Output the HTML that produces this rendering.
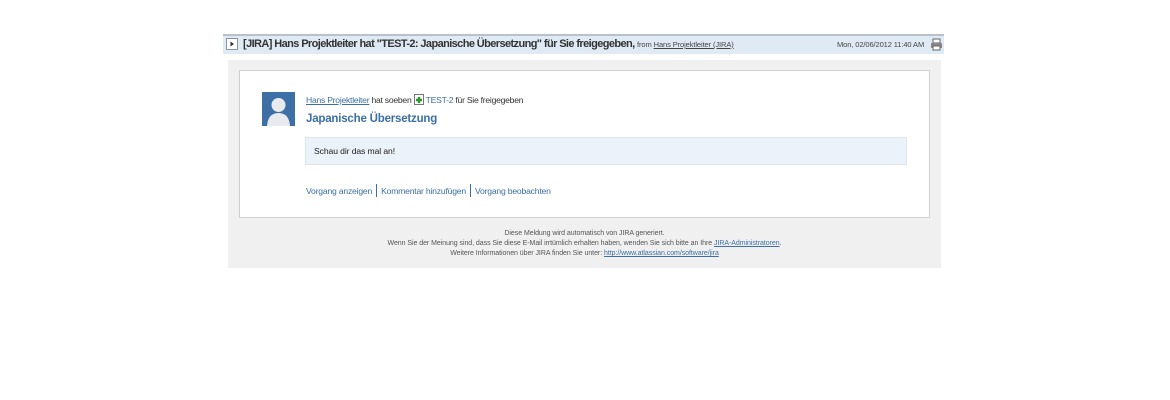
<!DOCTYPE html>
<html><head><meta charset="utf-8"><style>
body{margin:0;width:1170px;height:400px;background:#fff;font-family:"Liberation Sans",Arial,sans-serif;position:relative;overflow:hidden}
.a{position:absolute;white-space:nowrap}
.hdr{left:223px;top:34px;width:721px;height:18px;background:#dfeaf4;border-top:2px solid #b8c2cc;}
.btn{left:226px;top:38px;width:10px;height:10px;border:1px solid #8a96a2;background:#fff}
.title{left:243px;top:38px;font-size:11px;font-weight:bold;color:#333;letter-spacing:-0.6px}
.from{font-size:7.5px;font-weight:normal;color:#444}
.u{text-decoration:underline}
.grey{left:228px;top:60px;width:713px;height:208px;background:#f0f0f0}
.white{left:239px;top:70px;width:689px;height:146px;background:#fff;border:1px solid #cfcfcf}
.small{font-size:8.6px;color:#333;letter-spacing:-0.1px}
.link{color:#3b6fa6}
.sep{display:inline-block;width:1px;height:13px;background:#3b6fa6;vertical-align:-3px;margin:0 4px}
</style></head><body>
<div class="a hdr"></div>
<div class="a btn"><svg width="10" height="10" style="display:block"><path d="M3.5 2.5 L7 5 L3.5 7.5Z" fill="#333"/></svg></div>
<div class="a title">[JIRA] Hans Projektleiter hat "TEST-2: Japanische Übersetzung" für Sie freigegeben, <span class="from" style="letter-spacing:-0.1px">from <span class="u">Hans Projektleiter (JIRA)</span></span></div>
<div class="a small" style="left:837px;top:40px;font-size:7.5px;color:#444">Mon, 02/06/2012 11:40 AM</div>
<svg class="a" style="left:930px;top:38px" width="13" height="13"><rect x="3" y="1" width="7" height="4" fill="#fff" stroke="#666"/><rect x="1" y="5" width="11" height="5" fill="#888"/><rect x="3" y="8" width="7" height="4" fill="#fff" stroke="#666"/></svg>
<div class="a grey"></div>
<div class="a white"></div>
<svg class="a" style="left:262px;top:92px" width="33" height="34"><rect width="33" height="34" fill="#3b6fa6"/><circle cx="16.5" cy="13" r="7" fill="#e8eaed"/><path d="M5 34 Q6 21 16.5 21 Q27 21 28 34Z" fill="#e8eaed"/></svg>
<div class="a small" style="left:306px;top:94px;letter-spacing:-0.25px"><span class="u link">Hans Projektleiter</span> hat soeben <svg width="10" height="11" style="vertical-align:-2px"><rect x="0.5" y="0.5" width="9" height="10" fill="#fff" stroke="#777"/><path d="M5 3v6M2 6h6" stroke="#2a9a2a" stroke-width="2.5"/></svg> <span class="link">TEST-2</span> für Sie freigegeben</div>
<div class="a" style="left:306px;top:113px;font-size:11.5px;font-weight:bold;color:#3b6fa6;letter-spacing:-0.2px">Japanische Übersetzung</div>
<div class="a" style="left:305px;top:137px;width:600px;height:26px;background:#ebf2fa;border:1px solid #dde6ef"></div>
<div class="a small" style="left:314px;top:146px;color:#222">Schau dir das mal an!</div>
<div class="a small link" style="left:306px;top:184px;font-size:8.6px;letter-spacing:-0.2px">Vorgang anzeigen<span class="sep"></span>Kommentar hinzufügen<span class="sep"></span>Vorgang beobachten</div>
<div class="a" style="left:228px;width:713px;top:229px;text-align:center;font-size:7px;color:#555;line-height:10px;letter-spacing:-0.05px">Diese Meldung wird automatisch von JIRA generiert.<br>Wenn Sie der Meinung sind, dass Sie diese E-Mail irrtümlich erhalten haben, wenden Sie sich bitte an Ihre <span class="u link">JIRA-Administratoren</span>.<br>Weitere Informationen über JIRA finden Sie unter: <span class="u link">http://www.atlassian.com/software/jira</span></div>
</body></html>
